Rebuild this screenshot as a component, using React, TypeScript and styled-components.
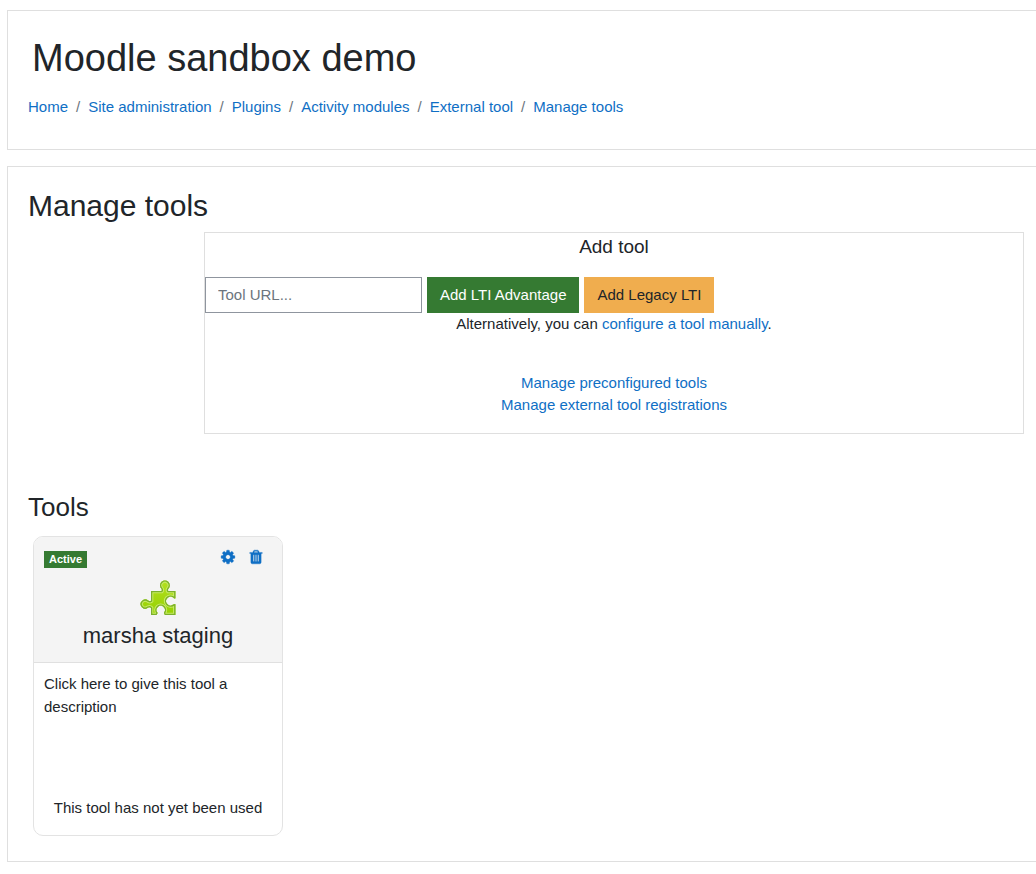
import React from "react";
import styled, { createGlobalStyle } from "styled-components";

const GlobalStyle = createGlobalStyle`
  *, *::before, *::after { box-sizing: border-box; }
  body {
    margin: 0;
    background: #fff;
    color: #212529;
    font-family: "Liberation Sans", Arial, sans-serif;
    font-size: 15px;
    line-height: 22px;
  }
`;

const Page = styled.div`
  display: flex;
  flex-direction: column;
  gap: 16px;
  padding: 10px 0 12px 7px;
`;

const Panel = styled.section`
  border: 1px solid #dfdfdf;
  border-right: 0;
  padding: 20px 12px 25px 20px;
`;

const HeaderPanel = styled(Panel).attrs({ as: "header" })`
  padding-top: 24px;
  padding-bottom: 31px;
`;

const SiteTitle = styled.h1`
  margin: 0;
  padding-left: 4px;
  font-size: 38px;
  line-height: 46px;
  font-weight: 400;
`;

const PageTitle = styled.h2`
  margin: 0 0 8px;
  font-size: 30px;
  line-height: 37px;
  font-weight: 400;
`;

const SectionTitle = styled.h3`
  margin: 56px 0 12px;
  font-size: 26px;
  line-height: 34px;
  font-weight: 400;
`;

const Link = styled.a`
  color: #0f6fc5;
  text-decoration: none;
  &:hover { text-decoration: underline; }
`;

const Crumbs = styled.ol`
  display: flex;
  flex-wrap: wrap;
  list-style: none;
  margin: 0;
  padding: 15px 0 0;
`;

const Crumb = styled.li`
  & + &::before {
    content: "/";
    padding: 0 8px;
    color: #6c757d;
  }
`;

const AddTool = styled.section`
  max-width: 820px;
  margin-left: auto;
  padding-bottom: 17px;
  border: 1px solid #dfdfdf;
  text-align: center;
`;

const AddToolTitle = styled.h4`
  margin: 2px 0 19px;
  font-size: 19px;
  line-height: 23px;
  font-weight: 400;
`;

const ToolForm = styled.form`
  display: flex;
  flex-wrap: wrap;
  gap: 5px;
`;

const UrlInput = styled.input`
  width: 217px;
  height: 36px;
  padding: 5px 12px 7px;
  border: 1px solid #8f959e;
  background: #fff;
  color: #495057;
  font: inherit;
  &::placeholder { color: #6c757d; opacity: 1; }
`;

const Button = styled.button<{ $tone: "success" | "warning" }>`
  height: 36px;
  padding: 0 13px;
  border: 0;
  background: ${(p) => (p.$tone === "success" ? "#357a32" : "#f0ad4e")};
  color: ${(p) => (p.$tone === "success" ? "#fff" : "#212529")};
  font: inherit;
  cursor: pointer;
`;

const Alternative = styled.p`
  margin: 0 0 37px;
`;

const ManageLinks = styled.div`
  display: flex;
  flex-direction: column;
  align-items: center;
`;

const ToolCard = styled.article`
  display: flex;
  flex-direction: column;
  width: 250px;
  min-height: 300px;
  margin-left: 5px;
  border: 1px solid #e3e3e3;
  border-radius: 10px;
  overflow: hidden;
`;

const CardHeader = styled.header`
  display: flex;
  flex-direction: column;
  align-items: center;
  padding: 12px 10px;
  border-bottom: 1px solid #e0e0e0;
  background: #f4f4f4;
`;

const CardBar = styled.div`
  display: flex;
  align-self: stretch;
  justify-content: space-between;
  align-items: flex-start;
`;

const Badge = styled.span`
  margin-top: 2px;
  padding: 0 5px;
  background: #357a32;
  color: #fff;
  font-size: 11px;
  line-height: 17px;
  font-weight: 700;
`;

const CardActions = styled.div`
  display: flex;
  gap: 12px;
  padding-right: 8px;
`;

const IconButton = styled.button`
  display: block;
  padding: 0;
  border: 0;
  background: none;
  color: #0f6fc5;
  cursor: pointer;
`;

const Icon = styled.svg`
  display: block;
  width: 16px;
  height: 16px;
  fill: currentColor;
  stroke: currentColor;
  stroke-width: 40px;
`;

const PuzzleArt = styled.svg`
  display: block;
  width: 36px;
  height: 36px;
  margin: 12px 0 6px;
`;

const ToolName = styled.h4`
  margin: 0;
  font-size: 22px;
  line-height: 28px;
  font-weight: 400;
`;

const Description = styled.p`
  margin: 0;
  padding: 9px 10px;
  line-height: 23px;
`;

const Usage = styled.p`
  margin: auto 0 0;
  padding: 0 10px 16px;
  text-align: center;
`;

const piecePath =
  "M11 11H21.5Q22.3 10 21.2 8.6A4.9 4.9 0 1 1 28.6 8.6Q27.5 10 28.3 11H35.4V18.3Q34.3 19 33.2 17.6A4.4 4.4 0 1 0 33.2 24.6Q34.3 23.5 35.4 24.2V35H25Q23.8 33.5 24 32.6A4.2 4.2 0 1 0 17.4 32.6Q17.6 33.5 16.5 35H11V28Q10 26.8 8.2 27.6A4.6 4.6 0 1 1 8.2 20.6Q10 21.5 11 20.8Z";

const Puzzle = () => (
  <PuzzleArt viewBox="0 0 36 36" aria-hidden="true">
    <defs>
      <linearGradient id="leaf" x1="0" y1="0" x2="0" y2="1">
        <stop offset="0" stopColor="#b4e020" />
        <stop offset="1" stopColor="#94d000" />
      </linearGradient>
      <clipPath id="piece">
        <path d={piecePath} />
      </clipPath>
    </defs>
    <g clipPath="url(#piece)">
      <path fill="url(#leaf)" d="M0 0H36V36H0Z" />
      <path fill="none" stroke="#c8ec62" strokeWidth="4.6" d={piecePath} />
      <path fill="none" stroke="#7cb02c" strokeWidth="2.6" d={piecePath} />
    </g>
  </PuzzleArt>
);

const Cog = () => (
  <Icon viewBox="0 0 1792 1792" aria-hidden="true">
    <path d="M1152 896q0-106-75-181t-181-75-181 75-75 181 75 181 181 75 181-75 75-181zm512-109v222q0 12-8 23t-20 13l-185 28q-19 54-39 91 35 50 107 138 10 12 10 25t-9 23q-27 37-99 108t-94 71q-12 0-26-9l-138-108q-44 23-91 38-16 136-29 186-7 28-36 28h-222q-14 0-24.5-8.5t-11.5-21.5l-28-184q-49-16-90-37l-141 107q-10 9-25 9-14 0-25-11-126-114-165-168-7-10-7-23 0-12 8-23 15-21 51-66.5t54-70.5q-27-50-41-99l-183-27q-13-2-21-12.5t-8-23.5v-222q0-12 8-23t19-13l186-28q14-46 39-92-40-57-107-138-10-12-10-24 0-10 9-23 26-36 98.5-107.5t94.5-71.5q13 0 26 10l138 107q44-23 91-38 16-136 29-186 7-28 36-28h222q14 0 24.5 8.5t11.5 21.5l28 184q49 16 90 37l142-107q9-9 24-9 13 0 25 10 129 119 165 170 7 8 7 22 0 12-8 23-15 21-51 66.5t-54 70.5q26 50 41 98l183 28q13 2 21 12.5t8 23.5z" />
  </Icon>
);

const Trash = () => (
  <Icon viewBox="0 0 1792 1792" aria-hidden="true">
    <path d="M704 1376v-704q0-14-9-23t-23-9h-64q-14 0-23 9t-9 23v704q0 14 9 23t23 9h64q14 0 23-9t9-23zm256 0v-704q0-14-9-23t-23-9h-64q-14 0-23 9t-9 23v704q0 14 9 23t23 9h64q14 0 23-9t9-23zm256 0v-704q0-14-9-23t-23-9h-64q-14 0-23 9t-9 23v704q0 14 9 23t23 9h64q14 0 23-9t9-23zm-544-992h448l-48-117q-7-9-17-11h-317q-10 2-17 11zm928 32v64q0 14-9 23t-23 9h-96v948q0 83-47 143.5t-113 60.5h-832q-66 0-113-58.5t-47-141.5v-952h-96q-14 0-23-9t-9-23v-64q0-14 9-23t23-9h309l70-167q15-37 54-63t79-26h320q40 0 79 26t54 63l70 167h309q14 0 23 9t9 23z" />
  </Icon>
);

const crumbs = [
  "Home",
  "Site administration",
  "Plugins",
  "Activity modules",
  "External tool",
  "Manage tools",
];

export default function App() {
  return (
    <>
      <GlobalStyle />
      <Page>
        <HeaderPanel>
          <SiteTitle>Moodle sandbox demo</SiteTitle>
          <nav aria-label="Breadcrumb">
            <Crumbs>
              {crumbs.map((name) => (
                <Crumb key={name}>
                  <Link href="#">{name}</Link>
                </Crumb>
              ))}
            </Crumbs>
          </nav>
        </HeaderPanel>
        <Panel as="main">
          <PageTitle>Manage tools</PageTitle>
          <AddTool>
            <AddToolTitle>Add tool</AddToolTitle>
            <ToolForm onSubmit={(e: React.FormEvent) => e.preventDefault()}>
              <UrlInput type="text" aria-label="Tool URL" placeholder="Tool URL..." />
              <Button type="submit" $tone="success">Add LTI Advantage</Button>
              <Button type="button" $tone="warning">Add Legacy LTI</Button>
            </ToolForm>
            <Alternative>
              Alternatively, you can <Link href="#">configure a tool manually</Link>.
            </Alternative>
            <ManageLinks>
              <Link href="#">Manage preconfigured tools</Link>
              <Link href="#">Manage external tool registrations</Link>
            </ManageLinks>
          </AddTool>
          <SectionTitle>Tools</SectionTitle>
          <ToolCard>
            <CardHeader>
              <CardBar>
                <Badge>Active</Badge>
                <CardActions>
                  <IconButton type="button" aria-label="Edit"><Cog /></IconButton>
                  <IconButton type="button" aria-label="Delete"><Trash /></IconButton>
                </CardActions>
              </CardBar>
              <Puzzle />
              <ToolName>marsha staging</ToolName>
            </CardHeader>
            <Description>Click here to give this tool a description</Description>
            <Usage>This tool has not yet been used</Usage>
          </ToolCard>
        </Panel>
      </Page>
    </>
  );
}
